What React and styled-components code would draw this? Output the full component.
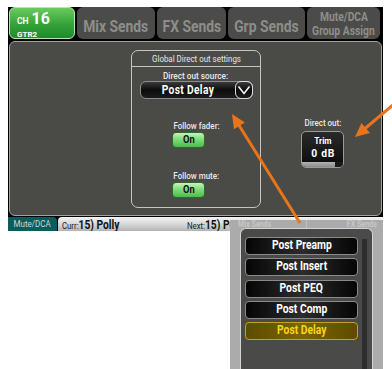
import React from "react";
import styled, { createGlobalStyle } from "styled-components";

const GlobalStyle = createGlobalStyle`
  html, body {
    margin: 0;
    padding: 0;
    background: #ffffff;
  }
  body {
    font-family: "Roboto", "Liberation Sans", sans-serif;
  }
`;

const sources = ["Post Preamp", "Post Insert", "Post PEQ", "Post Comp", "Post Delay"];

// orange callout arrow, line + filled head
const Arrow = ({ x1, y1, x2, y2 }) => {
  const dx = x2 - x1;
  const dy = y2 - y1;
  const len = Math.hypot(dx, dy);
  const ux = dx / len;
  const uy = dy / len;
  const bx = x2 - ux * 14;
  const by = y2 - uy * 14;
  const px = -uy * 6.5;
  const py = ux * 6.5;
  return (
    <g>
      <line x1={x1} y1={y1} x2={bx + ux * 2} y2={by + uy * 2} stroke="#e8751a" strokeWidth="3" />
      <polygon points={`${x2},${y2} ${bx + px},${by + py} ${bx - px},${by - py}`} fill="#e8751a" />
    </g>
  );
};

const App = () => {
  return (
    <Page>
      <GlobalStyle />
      <Screen>
        <Tabs>
          <ChannelTab>
            <ChannelLine>
              <ChannelSmall>CH</ChannelSmall>
              <ChannelNumber>16</ChannelNumber>
            </ChannelLine>
            <ChannelName>GTR2</ChannelName>
          </ChannelTab>
          <Tab>
            <Narrow $sx={0.84}>Mix Sends</Narrow>
          </Tab>
          <Tab>
            <Narrow $sx={0.84}>FX Sends</Narrow>
          </Tab>
          <Tab>
            <Narrow $sx={0.84}>Grp Sends</Narrow>
          </Tab>
          <Tab $small>
            <Narrow $sx={0.86}>Mute/DCA</Narrow>
            <Narrow $sx={0.86}>Group Assign</Narrow>
          </Tab>
        </Tabs>

        <Panel>
          <SettingsBox>
            <BoxTitle>
              <Narrow $sx={0.88}>Global Direct out settings</Narrow>
            </BoxTitle>
            <BoxBody>
              <Label>
                <Narrow $sx={0.87}>Direct out source:</Narrow>
              </Label>
              <Dropdown>
                <DropdownValue>
                  <Narrow $sx={0.82}>Post Delay</Narrow>
                </DropdownValue>
                <DropdownChevron>
                  <svg width="14" height="10" viewBox="0 0 14 10">
                    <path d="M1.5 1.5 L7 8.5 L12.5 1.5" fill="none" stroke="#f2f2f2" strokeWidth="1.6" />
                  </svg>
                </DropdownChevron>
              </Dropdown>
              <Label $top={22}>
                <Narrow $sx={0.84}>Follow fader:</Narrow>
              </Label>
              <OnButton>
                <Narrow $sx={0.85}>On</Narrow>
              </OnButton>
              <Label $top={23}>
                <Narrow $sx={0.84}>Follow mute:</Narrow>
              </Label>
              <OnButton>
                <Narrow $sx={0.85}>On</Narrow>
              </OnButton>
            </BoxBody>
          </SettingsBox>

          <DirectOut>
            <Label>
              <Narrow $sx={0.84}>Direct out:</Narrow>
            </Label>
            <TrimBox>
              <TrimText>
                <Narrow $sx={0.88}>Trim</Narrow>
              </TrimText>
              <TrimValue>
                <Narrow $sx={0.9}>0 dB</Narrow>
              </TrimValue>
              <TrimBar>
                <TrimBarEnd />
              </TrimBar>
            </TrimBox>
          </DirectOut>
        </Panel>

        <StatusBar>
          <StatusTag>
            <Narrow $sx={0.84}>Mute/DCA</Narrow>
          </StatusTag>
          <StatusStrip>
            <StatusItem $w={125}>
              <Narrow $sx={0.82} $origin="left">
                <StatusKey>Curr:</StatusKey>
                <StatusName>15) Polly</StatusName>
              </Narrow>
            </StatusItem>
            <StatusItem $w={43}>
              <Narrow $sx={0.82} $origin="left">
                <StatusKey>Next:</StatusKey>
                <StatusName>15) Polly</StatusName>
              </Narrow>
            </StatusItem>
          </StatusStrip>
        </StatusBar>
      </Screen>

      <Popup>
        <PopupHeader>
          <FadedTab>
            <Narrow $sx={0.84} $origin="left">Mix Sends</Narrow>
          </FadedTab>
          <FadedTab $right>
            <Narrow $sx={0.84} $origin="right">FX Sends</Narrow>
          </FadedTab>
        </PopupHeader>
        <PopupPanel>
          <OptionList>
            {sources.map((s) => (
              <Option key={s} $selected={s === "Post Delay"}>
                <Narrow $sx={0.86}>{s}</Narrow>
              </Option>
            ))}
          </OptionList>
          <ScrollTrack />
        </PopupPanel>
      </Popup>

      <Overlay width="392" height="369" viewBox="0 0 392 369">
        <Arrow x1={300} y1={223} x2={232} y2={114} />
        <Arrow x1={394} y1={104} x2={355} y2={137} />
      </Overlay>
    </Page>
  );
};

export default App;

const Page = styled.div`
  position: relative;
  width: 392px;
  height: 369px;
  overflow: hidden;
  padding: 7px 0 0 8px;
  box-sizing: border-box;
`;

const Narrow = styled.span`
  display: inline-block;
  white-space: nowrap;
  transform: scaleX(${(p) => p.$sx || 0.85});
  transform-origin: ${(p) => p.$origin || "center"};
`;

const Screen = styled.div`
  width: 375px;
  background: #000;
  display: flex;
  flex-direction: column;
`;

const Tabs = styled.div`
  display: flex;
  gap: 2px;
  height: 32px;
  padding: 0 3px 0 1px;
`;

const ChannelTab = styled.div`
  flex: 1;
  border-radius: 6px;
  background: linear-gradient(#6acb5e, #34a23a 55%, #1f8a2c);
  border: 1px solid #b8e6b0;
  box-sizing: border-box;
  color: #fff;
  padding: 3px 0 0 7px;
  font-weight: bold;
`;

const ChannelLine = styled.div`
  display: flex;
  align-items: baseline;
  gap: 3px;
  height: 16px;
`;

const ChannelSmall = styled.span`
  font-size: 8.5px;
`;

const ChannelNumber = styled.span`
  font-size: 16px;
  line-height: 16px;
`;

const ChannelName = styled.div`
  font-size: 8px;
  line-height: 10px;
  margin-top: 3px;
`;

const Tab = styled.div`
  flex: 1;
  border-radius: 6px;
  background: #4b4c49;
  color: #8d8e8b;
  font-weight: bold;
  font-size: ${(p) => (p.$small ? "12px" : "16.5px")};
  line-height: ${(p) => (p.$small ? "14px" : "16px")};
  display: flex;
  flex-direction: column;
  align-items: center;
  justify-content: center;
  padding-top: ${(p) => (p.$small ? "1px" : "7px")};
  box-sizing: border-box;
`;

const Panel = styled.div`
  margin: 2px 1px 0 1px;
  height: 175px;
  box-sizing: border-box;
  border: 1px solid #a2a29f;
  border-radius: 6px;
  background: #4a4b47;
  display: flex;
  align-items: flex-start;
  padding: 8px 0 0 121px;
`;

const SettingsBox = styled.div`
  width: 130px;
  height: 158px;
  box-sizing: border-box;
  border: 1.5px solid #c4c4c2;
  border-radius: 7px;
  display: flex;
  flex-direction: column;
`;

const BoxTitle = styled.div`
  height: 15px;
  border-bottom: 1.5px solid #c4c4c2;
  color: #e6e6e6;
  font-size: 9px;
  line-height: 16px;
  text-align: center;
`;

const BoxBody = styled.div`
  display: flex;
  flex-direction: column;
  align-items: center;
  padding-top: 4px;
`;

const Label = styled.div`
  color: #e8e8e8;
  font-size: 9.5px;
  font-weight: 500;
  line-height: 10px;
  margin-top: ${(p) => p.$top || 0}px;
`;

const Dropdown = styled.div`
  width: 113px;
  height: 18px;
  box-sizing: border-box;
  border: 1px solid #8c8c8c;
  border-radius: 6px;
  background: linear-gradient(#3a3a3a, #0c0c0c 50%, #1c1c1c);
  display: flex;
  align-items: center;
`;

const DropdownValue = styled.div`
  flex: 1;
  color: #fff;
  font-weight: bold;
  font-size: 12.5px;
  line-height: 16px;
  text-align: center;
  letter-spacing: 0.4px;
`;

const DropdownChevron = styled.div`
  width: 18px;
  height: 18px;
  margin-right: -1px;
  box-sizing: border-box;
  border: 1.5px solid #d8d8d8;
  border-radius: 6px;
  display: flex;
  align-items: center;
  justify-content: center;
`;

const OnButton = styled.div`
  width: 33px;
  height: 16px;
  margin: 1px 15px 0 0;
  box-sizing: border-box;
  border: 1px solid #2c6a2c;
  border-radius: 4px;
  background: linear-gradient(#c4f4bc, #7fdc78 45%, #4cbc4c);
  color: #111;
  font-weight: bold;
  font-size: 11px;
  line-height: 14px;
  text-align: center;
`;

const DirectOut = styled.div`
  margin: 68px 0 0 40px;
  display: flex;
  flex-direction: column;
  align-items: center;
  gap: 3px;
`;

const TrimBox = styled.div`
  width: 43px;
  height: 37px;
  box-sizing: border-box;
  border: 1.5px solid #9a9a9a;
  border-radius: 5px;
  background: linear-gradient(#2a2a2a, #0a0a0a);
  display: flex;
  flex-direction: column;
  align-items: center;
  overflow: hidden;
  color: #fff;
  font-weight: bold;
`;

const TrimText = styled.div`
  font-size: 9.5px;
  line-height: 11px;
  margin-top: 3px;
`;

const TrimValue = styled.div`
  font-size: 11.5px;
  line-height: 13px;
  margin-top: 1px;
  letter-spacing: 0.8px;
`;

const TrimBar = styled.div`
  margin-top: auto;
  width: 100%;
  height: 5px;
  background: linear-gradient(#b4b4b4, #8a8a8a);
  display: flex;
  justify-content: flex-end;
`;

const TrimBarEnd = styled.div`
  width: 8px;
  background: #1a1a1a;
`;

const StatusBar = styled.div`
  display: flex;
  gap: 1px;
  height: 14px;
  margin-top: 1px;
`;

const StatusTag = styled.div`
  width: 49px;
  background: #0d5c5c;
  color: #c8d8d8;
  font-size: 9.5px;
  line-height: 14px;
  text-align: center;
  border-top-right-radius: 4px;
`;

const StatusStrip = styled.div`
  flex: 1;
  background: linear-gradient(#f4f4f4, #d8d8d8 50%, #b4b4b4);
  border-top-left-radius: 4px;
  display: flex;
  padding-left: 4px;
  overflow: hidden;
`;

const StatusItem = styled.div`
  width: ${(p) => p.$w}px;
  flex-shrink: 0;
  overflow: hidden;
  line-height: 14px;
  height: 14px;
`;

const StatusKey = styled.span`
  color: #222;
  font-size: 9.5px;
  line-height: 14px;
`;

const StatusName = styled.span`
  color: #111;
  font-weight: bold;
  font-size: 12.5px;
  line-height: 14px;
`;

const Popup = styled.div`
  position: absolute;
  left: 230px;
  top: 220px;
  width: 153px;
  height: 160px;
  background: #ababab;
  display: flex;
  flex-direction: column;
`;

const PopupHeader = styled.div`
  height: 8px;
  display: flex;
`;

const FadedTab = styled.div`
  flex: 1;
  color: #c6c6c6;
  font-weight: bold;
  font-size: 8.5px;
  line-height: 8px;
  padding: 0 6px 0 8px;
  border-left: ${(p) => (p.$right ? "1px solid #c0c0c0" : "none")};
  text-align: ${(p) => (p.$right ? "right" : "left")};
`;

const PopupPanel = styled.div`
  margin: 0 10px 0 10px;
  flex: 1;
  background: #4a4a49;
  border: 1px solid #d4d4d4;
  border-bottom: none;
  border-radius: 6px 6px 0 0;
  display: flex;
  padding: 8px 5px 0 4px;
  gap: 4px;
`;

const OptionList = styled.div`
  flex: 1;
  display: flex;
  flex-direction: column;
  gap: 3.3px;
`;

const Option = styled.div`
  height: 18px;
  box-sizing: border-box;
  border: 1.5px solid ${(p) => (p.$selected ? "#c4a21c" : "#8a8a8a")};
  border-radius: 4px;
  background: ${(p) =>
    p.$selected
      ? "linear-gradient(90deg, #5e4c00, #7c6400 50%, #5e4c00)"
      : "linear-gradient(90deg, #050505, #2c2c2c 50%, #050505)"};
  color: ${(p) => (p.$selected ? "#f8d414" : "#ffffff")};
  font-weight: bold;
  font-size: 12px;
  line-height: 15px;
  text-align: center;
`;

const ScrollTrack = styled.div`
  width: 5px;
  margin-top: 2px;
  background: #2e2e2e;
`;

const Overlay = styled.svg`
  position: absolute;
  left: 0;
  top: 0;
  pointer-events: none;
`;
